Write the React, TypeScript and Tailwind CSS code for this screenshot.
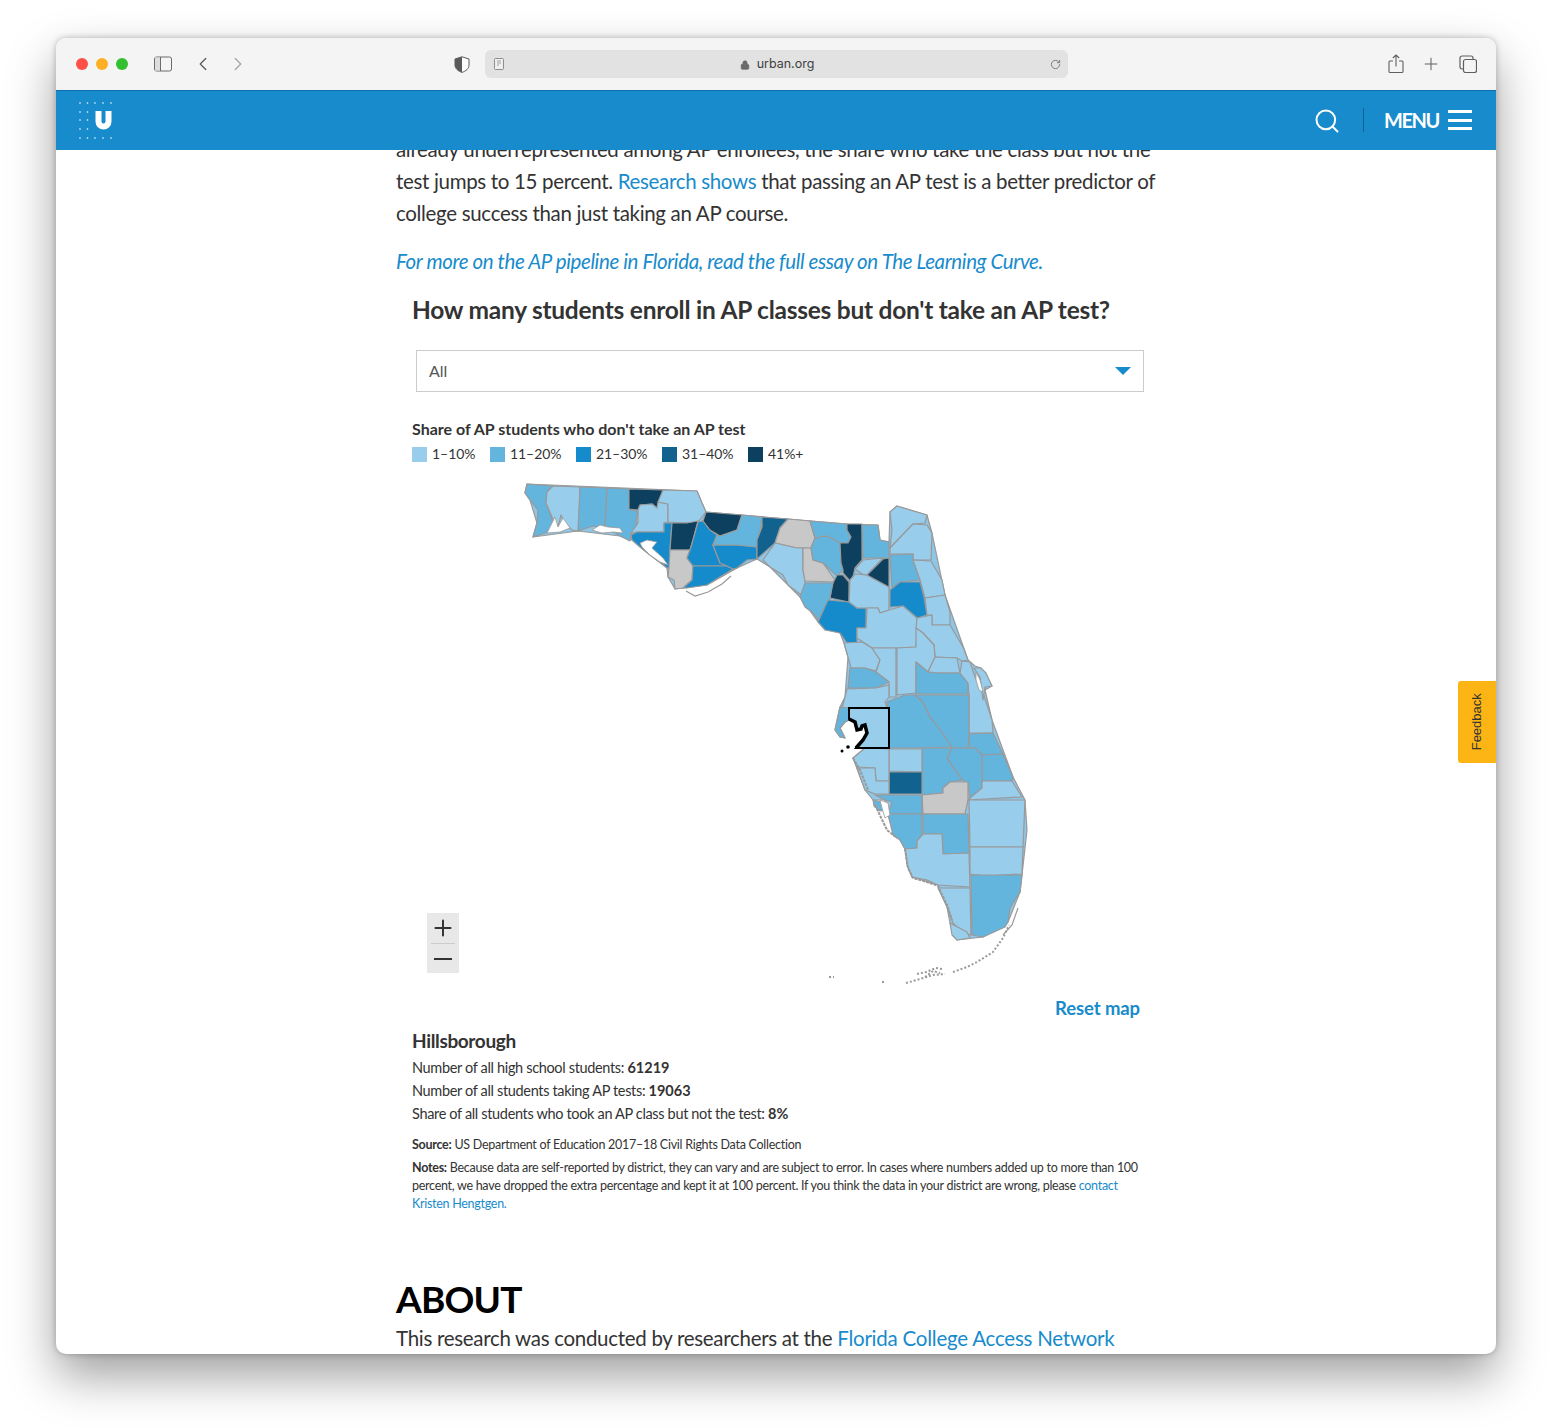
import React from 'react';
import { ChevronLeft, ChevronRight, Plus, Search, Lock, RotateCw } from 'lucide-react';

const L = '#98cdeb';
const M = '#64b5de';
const B = '#168bcc';
const D = '#12628f';
const K = '#0d3f5e';
const G = '#c8c8c8';

// whole state, goes under the counties so no gaps show between them
const outline =
  '525,493 527,484 697,491 702,503 706,512 742,515 788,519 847,524 878,525 880,540 889,542 890,512 897,506 927,515 932,533 945,595 968,660 975,666 981,668 992,686 985,690 992,720 1013,777 1025,800 1027,830 1022,875 1020,892 1008,922 983,937 957,940 950,923 947,907 938,885 912,877 905,849 890,822 885,800 873,800 865,790 853,758 865,748 856,748 863,740 867,733 865,725 857,730 855,722 849,720 845,722 840,728 845,738 840,737 835,730 840,707 845,697 848,657 844,643 840,633 818,622 800,597 788,585 770,567 757,559 737,568 707,585 683,588 675,589 668,577 667,568 650,555 632,540 620,536 578,531 533,537 537,523 530,500';

// county shapes, traced by hand from the picture (page coordinates)
const counties: [string, string][] = [
  [M, '525,493 527,484 553,486 547,492 546,503 550,513 553,523 548,532 533,537 537,523 538,510 530,500'],
  [L, '553,486 580,487 579,531 572,530 564,522 561,515 558,527 552,517 546,503 547,492'],
  [M, '580,487 607,488 605,527 598,527 593,526 578,531'],
  [M, '607,488 630,489 630,510 638,511 636,520 637,532 631,533 630,541 620,536 605,527'],
  [K, '629,489 663,490 657,508 652,504 640,505 638,510 629,509'],
  [L, '638,510 640,505 652,504 657,508 658,502 668,504 668,522 664,523 664,532 637,532 631,533 638,523'],
  [L, '663,490 697,491 702,503 706,512 698,522 687,523 668,522 668,504 658,502'],
  [B, '631,535 637,532 664,532 664,523 672,523 670,550 670,568 667,568 660,562 650,555 640,547 632,540'],
  [K, '672,523 687,523 698,521 693,540 690,550 670,550'],
  [G, '670,550 690,550 687,558 693,566 692,580 683,588 675,589 674,580 668,577 669,567'],
  [B, '698,522 703,521 710,530 717,535 713,545 720,563 727,566 693,566 687,558 690,550 693,540'],
  [K, '706,512 742,515 737,530 720,536 710,530 703,521'],
  [B, '693,566 727,566 733,569 720,577 707,585 687,588 683,588 692,580'],
  [B, '713,545 737,545 757,547 757,559 747,560 737,568 733,569 727,566 720,563'],
  [M, '742,515 762,517 760,530 757,547 737,545 713,545 717,535 720,536 737,530'],
  [D, '762,517 788,519 780,528 775,543 757,559 757,540 762,527'],
  [G, '788,519 810,521 815,538 811,548 797,548 775,543 780,528'],
  [L, '775,543 797,548 803,548 803,570 805,580 805,593 800,594 788,585 783,575 770,567 763,560'],
  [G, '803,548 811,548 813,560 823,563 835,580 833,582 805,581 803,570'],
  [M, '810,521 847,524 847,530 851,537 848,543 840,543 827,536 815,538'],
  [M, '815,538 827,536 840,543 841,563 843,570 837,576 823,563 813,560 811,548'],
  [K, '847,524 862,524 862,560 855,568 853,577 850,581 843,573 843,570 841,563 840,543 848,543 851,537 847,530'],
  [K, '837,575 843,575 849,582 849,602 830,598 832,585'],
  [M, '805,583 833,583 830,598 828,603 818,620 813,613 805,607 800,597'],
  [B, '828,600 849,602 857,608 866,608 866,628 857,628 857,643 847,643 840,633 825,630 818,622'],
  [L, '850,580 855,574 867,575 889,587 889,610 880,613 878,608 857,608 849,602'],
  [L, '855,569 863,560 883,558 867,575 862,574'],
  [M, '862,525 878,525 880,540 889,542 889,558 863,558'],
  [K, '867,575 883,559 889,558 889,587'],
  [L, '890,512 897,506 910,510 927,515 925,523 913,524 890,548 892,530'],
  [L, '890,548 913,524 927,525 932,533 931,560 913,560 913,554 890,554'],
  [M, '890,555 913,554 913,560 920,580 900,582 892,588'],
  [L, '913,560 931,561 942,580 945,595 925,598 920,580'],
  [B, '890,590 900,582 920,582 924,597 927,615 917,618 910,612 903,606 890,607'],
  [L, '925,598 945,595 950,612 950,625 932,625 932,615 927,615'],
  [L, '867,608 878,608 880,613 889,610 903,606 910,612 917,618 916,647 897,648 872,648 857,638 857,628 866,628'],
  [L, '917,618 932,615 932,625 950,625 963,647 968,660 962,661 957,658 935,657 934,645 923,633 916,628'],
  [L, '844,643 862,642 872,648 880,660 876,671 865,668 851,668 848,657'],
  [L, '872,648 896,648 896,697 889,697 889,682 876,672 880,660'],
  [L, '897,648 916,647 916,628 923,633 934,645 935,657 928,672 916,662 916,693 897,695'],
  [L, '935,657 957,658 960,673 938,673 928,672'],
  [M, '916,662 928,672 938,673 960,673 968,683 968,694 916,694'],
  [L, '962,661 970,662 975,677 983,693 992,720 993,733 969,733 969,695 968,683 960,673'],
  [L, '974,668 981,668 986,673 992,686 985,687 983,700 980,677'],
  [M, '850,668 865,668 876,672 889,682 876,688 848,688'],
  [L, '847,689 876,688 889,685 889,697 885,702 887,708 849,708 842,708 845,697'],
  [M, '888,708 887,702 905,695 915,695 923,702 930,717 942,732 952,747 922,748 889,748'],
  [M, '915,695 969,695 969,733 968,748 952,748 942,732 930,717 923,702'],
  [M, '969,734 993,733 1003,754 982,755 975,748 969,748'],
  [M, '982,755 1003,754 1013,777 1012,781 982,781'],
  [M, '952,748 975,748 982,755 982,788 970,798 968,783 962,780 947,758'],
  [M, '922,748 952,748 947,758 962,780 950,782 943,788 943,793 922,795'],
  [L, '889,749 922,749 922,772 889,771'],
  [D, '889,772 922,772 922,794 889,794'],
  [L, '853,758 865,748 889,749 889,781 876,781 875,768 857,767'],
  [L, '857,768 875,768 876,781 889,781 889,794 875,794 865,790'],
  [G, '922,795 943,793 943,788 950,782 968,782 968,800 965,814 923,814'],
  [L, '970,798 982,788 982,781 1012,781 1022,797 968,800'],
  [M, '875,795 922,795 922,814 888,814 892,802 885,800'],
  [M, '888,814 922,814 922,840 917,841 917,848 905,849 900,840 893,835 890,822'],
  [M, '923,814 968,814 969,853 943,854 942,834 923,834'],
  [L, '969,800 1025,800 1023,847 1015,847 970,847'],
  [L, '970,847 1023,847 1022,874 985,876 970,874'],
  [M, '971,875 1022,875 1020,892 1010,908 1008,922 1005,927 983,937 972,935'],
  [L, '938,888 970,888 971,935 963,933 953,923 947,907'],
  [L, '950,923 967,932 970,938 957,940 952,935'],
  [L, '905,849 917,848 917,841 923,834 942,834 943,854 969,853 970,887 938,885 927,880 912,877 907,865'],
  [M, '840,707 849,708 849,720 845,722 840,728 845,738 840,737 835,730'],
  [M, '873,800 882,802 886,810 880,811 874,806'],
];

// bays and lagoons that stay white
const bays = [
  '547,533 555,517 558,527 563,518 570,528 560,532',
  '592,530 600,525 608,527 620,528 623,533 613,532 602,533',
  '640,543 647,540 657,542 652,548 663,558 668,565 660,562 650,555 642,547',
  '976,672 980,680 983,692 979,690 976,680',
  '880,800 888,803 890,815 885,818 882,808',
];

const legend = [
  { color: L, label: '1–10%' },
  { color: M, label: '11–20%' },
  { color: B, label: '21–30%' },
  { color: D, label: '31–40%' },
  { color: K, label: '41%+' },
];

function FloridaMap() {
  return (
    <svg width="520" height="510" viewBox="520 480 520 510" className="ml-[108px] block">
      <polygon points={outline} fill="#8fc6e6" stroke="#999999" strokeWidth="1.2" strokeLinejoin="round" />
      {counties.map(([fill, points], i) => (
        <polygon key={i} points={points} fill={fill} stroke="#999999" strokeWidth="1.2" strokeLinejoin="round" />
      ))}
      {bays.map((points) => (
        <polygon key={points} points={points} fill="#ffffff" stroke="#999999" strokeWidth="0.8" />
      ))}
      {/* coast lines and barrier islands */}
      <g fill="none" stroke="#999999" strokeWidth="1.2">
        <polyline points="686,591 695,596 708,592 722,584 731,576" />
        <polyline points="1018,908 1012,925 1003,935" />
      </g>
      <g fill="none" stroke="#999999" strokeWidth="2" strokeDasharray="3 1">
        <polyline points="905,849 908,868 913,878 927,882 938,886 947,905 952,920" />
        <polyline points="875,805 887,830 897,838" />
        <polyline points="853,758 860,770 868,790" />
      </g>
      {/* keys */}
      <g fill="none" stroke="#999999" strokeWidth="2" strokeDasharray="2 2">
        <polyline points="953,972 967,967 977,962 993,952 1003,938 1009,925" />
        <polyline points="906,983 920,979 933,975 945,974" />
        <polyline points="917,974 926,972 936,968 942,969" />
        <polyline points="925,977 933,971 940,973" />
        <polyline points="829,977 834,977" />
        <polyline points="882,982 886,982" />
      </g>
      {/* selected county */}
      <polygon
        points="849,708 889,708 889,748 856,748 863,740 867,733 865,725 862,726 861,729 857,730 855,722 849,719"
        fill={L}
        stroke="#000000"
        strokeWidth="2"
      />
      <path d="M849 719l6 3 2 8 4-1 1-3 3-1 2 8-4 7-7 8" fill="none" stroke="#000000" strokeWidth="3.500" />
      <circle cx="842" cy="751" r="1.5" fill="#000000" />
      <circle cx="848" cy="747" r="1.8" fill="#000000" />
    </svg>
  );
}

function Logo() {
  const top = [80, 87.5, 95, 103, 111];
  const side = [111, 119, 128];
  return (
    <svg width="36" height="40" viewBox="78 100 36 40" className="block">
      {top.map((x) => (
        <g key={x} fill="#ffffff" opacity="0.9">
          <rect x={x - 0.7} y="101.3" width="1.4" height="1.4" />
          <rect x={x - 0.7} y="136.3" width="1.4" height="1.4" />
        </g>
      ))}
      {side.map((y) => (
        <g key={y} fill="#ffffff" opacity="0.9">
          <rect x="79.3" y={y - 0.7} width="1.4" height="1.4" />
          <rect x="86.8" y={y - 0.7} width="1.4" height="1.4" />
        </g>
      ))}
      <path d="M98.5 110v10.5a5 5 0 0 0 10 0V110" fill="none" stroke="#ffffff" strokeWidth="6" />
    </svg>
  );
}

function Toolbar() {
  return (
    <div className="flex h-[53px] items-center border-b border-[#0f6fb0] bg-[#f4f4f4] text-[#5f5f5f]">
      <div className="ml-5 flex gap-2">
        <span className="h-3 w-3 rounded-full bg-[#fc5048]" />
        <span className="h-3 w-3 rounded-full bg-[#fdb024]" />
        <span className="h-3 w-3 rounded-full bg-[#33c030]" />
      </div>
      <svg width="18" height="16" viewBox="0 0 18 16" className="ml-[26px]">
        <rect x="0.5" y="1" width="17" height="14" rx="2" fill="none" stroke="#6b6b6b" />
        <rect x="1" y="1.5" width="5.5" height="13" fill="#dddddd" />
        <line x1="6.5" y1="1" x2="6.5" y2="15" stroke="#6b6b6b" />
      </svg>
      <ChevronLeft className="ml-[20px] h-[22px] w-[22px]" strokeWidth={1.5} />
      <ChevronRight className="ml-[13px] h-[22px] w-[22px] text-[#a8a8a8]" strokeWidth={1.5} />
      <svg width="16" height="17" viewBox="0 0 16 17" className="ml-[205px]">
        <path d="M8 .8 15 3v6c0 3.5-3 6-7 7.400C4 15 1 12.500 1 9V3z" fill="#ffffff" stroke="#5a5a5a" />
        <path d="M8 .8V16.400C4 15 1 12.500 1 9V3z" fill="#5a5a5a" />
      </svg>
      <div className="ml-[15px] flex h-[28px] w-[583px] items-center rounded-[6px] bg-[#e2e2e2] pl-[9px] pr-[7px]">
        <svg width="10" height="12" viewBox="0 0 10 12">
          <rect x="0.5" y="0.500" width="9" height="11" rx="1" fill="#efefef" stroke="#8d8d8d" />
          <path d="M3 3h4M3 5h4M3 7h2" stroke="#a0a0a0" />
        </svg>
        <div className="mt-[1px] flex flex-1 items-center justify-center gap-[7px] font-['Inter',sans-serif] text-[12.500px] text-[#3f3f3f]">
          <Lock className="h-[10px] w-[10px] text-[#6a6a6a]" fill="#6a6a6a" />
          urban.org
        </div>
        <RotateCw className="h-[11px] w-[11px] text-[#777777]" />
      </div>
      <svg width="16" height="20" viewBox="0 0 16 20" className="ml-[320px]" fill="none" stroke="#5f5f5f" strokeWidth="1.100">
        <path d="M5 7H2a1 1 0 0 0-1 1v9.500a1 1 0 0 0 1 1h12a1 1 0 0 0 1-1V8a1 1 0 0 0-1-1h-3" />
        <path d="M8 12.500V1M4.800 4 8 1l3.200 3" />
      </svg>
      <Plus className="ml-[17px] h-[20px] w-[20px]" strokeWidth={1.200} />
      <svg width="18" height="18" viewBox="0 0 18 18" className="ml-[18px]" fill="none" stroke="#5f5f5f" strokeWidth="1.200">
        <rect x="4.500" y="4.500" width="13" height="13" rx="2" />
        <path d="M4.500 14H3a2 2 0 0 1-2-2V3a2 2 0 0 1 2-2h9a2 2 0 0 1 2 2v1.500" />
      </svg>
    </div>
  );
}

function SiteHeader() {
  return (
    <div className="relative z-10 flex h-[59px] items-center bg-[#178bcb] text-white">
      <div className="ml-[22px]">
        <Logo />
      </div>
      <Search className="ml-auto h-[28px] w-[28px]" strokeWidth={1.700} />
      <div className="ml-[22px] mb-[1px] h-[24px] w-px bg-[#12628f]" />
      <span className="mb-[2px] ml-[20px] font-['Lato',sans-serif] text-[20px] font-bold tracking-[-1.400px]">MENU</span>
      <div className="mb-[1px] ml-[9px] mr-[24px] flex w-[24px] flex-col gap-[5.500px]">
        <span className="h-[3px] bg-white" />
        <span className="h-[3px] bg-white" />
        <span className="h-[3px] bg-white" />
      </div>
    </div>
  );
}

function Article() {
  return (
    <div className="ml-[340px] mt-[-17px] w-[780px] font-['Lato',sans-serif] text-[#333333]">
      <p className="whitespace-nowrap text-[20.500px] leading-[32px] tracking-[-0.325px]">
        already underrepresented among AP enrollees, the share who take the class but not the
        <br />
        test jumps to 15 percent. <span className="text-[#178bcb]">Research shows</span> that passing an AP test is a better predictor of
        <br />
        college success than just taking an AP course.
      </p>
      <p className="mt-[16px] whitespace-nowrap text-[20.500px] italic leading-[32px] tracking-[-0.385px] text-[#178bcb]">
        For more on the AP pipeline in Florida, read the full essay on The Learning Curve.
      </p>

      <div className="ml-[16px] w-[732px]">
        <h2 className="mt-[17px] whitespace-nowrap text-[24.500px] font-bold leading-[32px] tracking-[-0.250px]">
          How many students enroll in AP classes but don't take an AP test?
        </h2>
        <div className="ml-[4px] mt-[24px] flex h-[42px] w-[728px] items-center justify-between border border-[#cccccc] pl-[12px] pr-[12px] text-[16px] text-[#555555]">
          All
          <svg width="16" height="8" viewBox="0 0 16 8">
            <path d="M0 0h16L8 8z" fill="#178bcb" />
          </svg>
        </div>
        <div className="mt-[26px] text-[16px] font-bold leading-[22px]">Share of AP students who don't take an AP test</div>
        <div className="mt-[4px] flex gap-[14.500px] text-[14px] leading-[20px] tracking-[-0.050px]">
          {legend.map((item) => (
            <div key={item.label} className="flex items-center gap-[5px]">
              <span className="h-[15px] w-[15px]" style={{ background: item.color }} />
              {item.label}
            </div>
          ))}
        </div>

        <div className="relative mt-[16px] h-[510px]">
          <FloridaMap />
          <div className="absolute left-[15px] top-[433px] flex h-[60px] w-[32px] flex-col items-center bg-[#e8e8e8] text-[#333333]">
            <Plus className="mt-[2px] h-[26px] w-[26px]" strokeWidth={1.800} />
            <span className="mt-[2px] h-px w-[24px] bg-[#cccccc]" />
            <span className="mt-[14px] h-[2px] w-[18px] bg-[#333333]" />
          </div>
        </div>

        <div className="mt-[6px] pr-[4px] text-right text-[18.500px] font-bold leading-[24px] tracking-[-0.100px] text-[#178bcb]">Reset map</div>

        <div className="mt-[9px] text-[19px] font-bold leading-[24px] tracking-[-0.350px]">Hillsborough</div>
        <div className="mt-[3px] text-[14.500px] leading-[23px] tracking-[-0.340px]">
          <div>Number of all high school students: <b className="tracking-normal">61219</b></div>
          <div>Number of all students taking AP tests: <b className="tracking-normal">19063</b></div>
          <div>Share of all students who took an AP class but not the test: <b className="tracking-normal">8%</b></div>
        </div>
        <div className="mt-[11px] text-[12.500px] leading-[18px] tracking-[-0.270px]">
          <b>Source:</b> US Department of Education 2017–18 Civil Rights Data Collection
        </div>
        <div className="mt-[5px] whitespace-nowrap text-[12.500px] leading-[18px] tracking-[-0.280px]">
          <b>Notes:</b> Because data are self-reported by district, they can vary and are subject to error. In cases where numbers added up to more than 100
          <br />
          percent, we have dropped the extra percentage and kept it at 100 percent. If you think the data in your district are wrong, please <span className="text-[#178bcb]">contact</span>
          <br />
          <span className="text-[#178bcb]">Kristen Hengtgen.</span>
        </div>
      </div>

      <h1 className="mt-[62px] text-[37px] font-bold leading-[48px] tracking-[-0.800px] text-black">ABOUT</h1>
      <p className="mt-[-1px] whitespace-nowrap text-[20.500px] leading-[32px] tracking-[-0.300px]">
        This research was conducted by researchers at the <span className="tracking-[-0.230px] text-[#178bcb]">Florida College Access Network</span>
      </p>
    </div>
  );
}

export default function App() {
  return (
    <div className="h-[1428px] w-[1552px] overflow-hidden bg-white pl-[56px] pt-[38px]">
      <div className="relative h-[1316px] w-[1440px] overflow-hidden rounded-[10px] bg-white shadow-[0_22px_48px_rgba(0,0,0,0.38),0_0_6px_rgba(0,0,0,0.25)]">
        <Toolbar />
        <SiteHeader />
        <Article />
        <div className="absolute right-0 top-[643px] flex h-[82px] w-[38px] items-center justify-center rounded-l-[3px] bg-[#fdb515]">
          <span className="-rotate-90 font-['Liberation_Sans',sans-serif] text-[13px] text-[#333333]">Feedback</span>
        </div>
      </div>
    </div>
  );
}
